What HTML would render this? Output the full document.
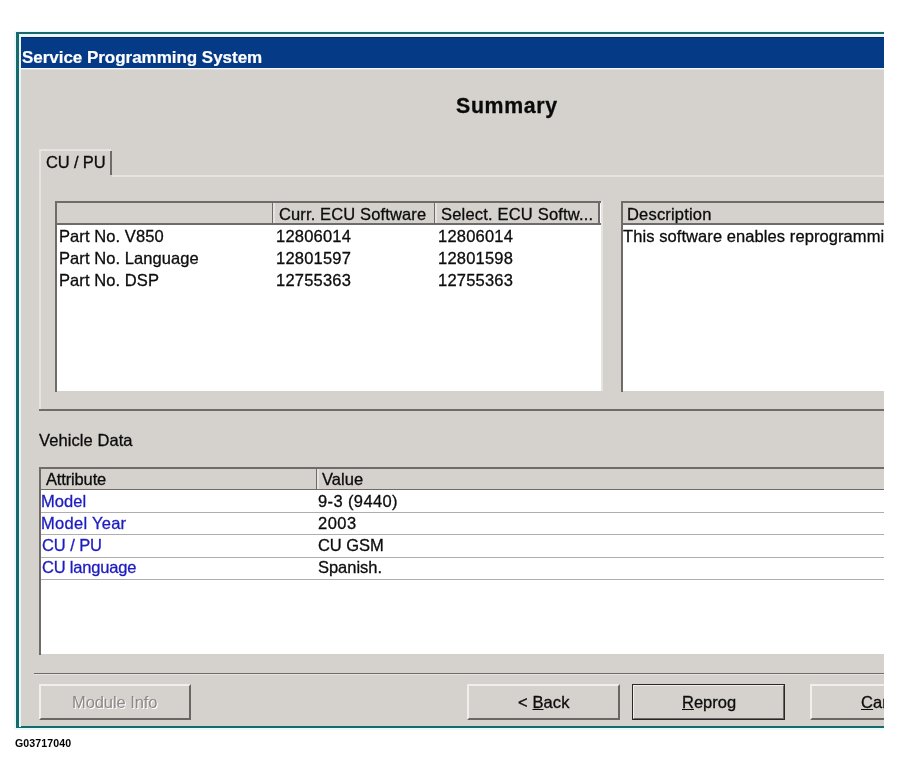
<!DOCTYPE html>
<html><head><meta charset="utf-8"><title>Service Programming System</title>
<style>
html,body{margin:0;padding:0;background:#fff;}
body{width:900px;height:779px;position:relative;overflow:hidden;font-family:"Liberation Sans",sans-serif;font-size:16.5px;color:#0c0c0c;}
.a{position:absolute;}
.t,.bt{will-change:transform;-webkit-text-stroke:0.3px currentColor;}
.t{position:absolute;white-space:nowrap;line-height:18px;font-size:16.5px;letter-spacing:0.08px;}
#clip{left:0;top:0;width:884px;height:779px;overflow:hidden;}
#win{left:16px;top:32px;width:900px;height:696px;background:#d5d1cd;}
#teal{left:16px;top:32px;width:900px;height:692px;border-left:3px solid #176a6c;border-top:2px solid #176a6c;border-bottom:2px solid #176a6c;}
#lite{left:19px;top:34px;width:900px;height:690px;border-left:2px solid #e9f5f8;border-top:3px solid #e9f5f8;}
#title{left:21px;top:37px;width:900px;height:31px;background:#053a87;border-top:1px solid #032c6c;box-sizing:border-box;}
#titletx{left:21.7px;top:48px;color:#fff;font-weight:bold;line-height:20px;font-size:17px;letter-spacing:-0.03px;-webkit-text-stroke:0.2px #fff;}
#tline{left:21px;top:68px;width:900px;height:1px;background:#f4f6f8;border-bottom:1px solid #e2e0dd;}
#summary{left:456px;top:94px;font-weight:bold;font-size:21.3px;line-height:24px;color:#0a0a0a;letter-spacing:0.68px;}
/* tab */
.hl{background:#e6e3e0;}
.dk{background:#6f6b68;}
#tabtx{left:45.6px;top:153px;letter-spacing:-0.15px;}
/* lists */
.wb{background:#fff;}
.hd{background:#d5d1cd;}
.bl{color:#1c1cc0;}
.rl{height:1px;background:#aeaeae;left:41px;width:900px;}
/* bottom */
.btn{box-sizing:border-box;height:36px;border-left:2px solid #f1efec;border-top:2px solid #f1efec;border-right:2px solid #6a6663;border-bottom:2px solid #6a6663;}
.bt{position:absolute;white-space:nowrap;line-height:18px;font-size:16.5px;top:693px;letter-spacing:0.1px;}
.bt i{font-style:normal;text-decoration:underline;}
#cap{left:14.5px;top:737px;font-weight:bold;font-size:10.6px;line-height:12px;color:#000;letter-spacing:0.1px;-webkit-text-stroke:0;}
</style></head><body>
<div id="clip" class="a">
  <div class="a" style="left:14px;top:31px;width:900px;height:699px;background:#eafafc;"></div>
  <div id="win" class="a"></div>
  <div id="teal" class="a"></div>
  <div id="lite" class="a"></div>
  <div id="title" class="a"></div>
  <span id="titletx" class="t">Service Programming System</span>
  <div id="tline" class="a"></div>
  <span id="summary" class="t">Summary</span>

  <!-- tab control -->
  <div class="a hl" style="left:39px;top:150px;width:2px;height:260px;"></div>
  <div class="a hl" style="left:39px;top:149px;width:72px;height:2px;"></div>
  <div class="a dk" style="left:110px;top:151px;width:2px;height:24px;"></div>
  <div class="a hl" style="left:112px;top:175px;width:800px;height:2px;"></div>
  <div class="a dk" style="left:39px;top:409px;width:900px;height:2px;"></div>
  <span id="tabtx" class="t">CU / PU</span>

  <!-- list 1 -->
  <div class="a wb" style="left:55px;top:201px;width:546px;height:190px;"></div>
  <div class="a" style="left:601px;top:201px;width:2px;height:190px;background:#e6e4e2;"></div>
  <div class="a hd" style="left:57px;top:203px;width:542px;height:20px;"></div>
  <div class="a dk" style="left:55px;top:201px;width:546px;height:2px;"></div>
  <div class="a dk" style="left:55px;top:201px;width:2px;height:191px;"></div>
  <div class="a dk" style="left:57px;top:223px;width:544px;height:2px;"></div>
  <div class="a dk" style="left:598px;top:203px;width:2px;height:22px;"></div>
  <div class="a dk" style="left:272px;top:203px;width:1px;height:20px;"></div>
  <div class="a hl" style="left:273px;top:203px;width:2px;height:20px;"></div>
  <div class="a dk" style="left:434px;top:203px;width:1px;height:20px;"></div>
  <div class="a hl" style="left:435px;top:203px;width:2px;height:20px;"></div>
  <span class="t" style="left:278.5px;top:204.5px;letter-spacing:0.13px;">Curr. ECU Software</span>
  <span class="t" style="left:441px;top:204.5px;letter-spacing:0.19px;">Select. ECU Softw...</span>
  <span class="t" style="left:58.5px;top:226.5px;">Part No. V850</span>
  <span class="t" style="left:58.5px;top:248.5px;">Part No. Language</span>
  <span class="t" style="left:58.5px;top:270.5px;">Part No. DSP</span>
  <span class="t" style="left:275.5px;letter-spacing:0.2px;top:226.5px;">12806014</span>
  <span class="t" style="left:275.5px;letter-spacing:0.2px;top:248.5px;">12801597</span>
  <span class="t" style="left:275.5px;letter-spacing:0.2px;top:270.5px;">12755363</span>
  <span class="t" style="left:437.5px;letter-spacing:0.2px;top:226.5px;">12806014</span>
  <span class="t" style="left:437.5px;letter-spacing:0.2px;top:248.5px;">12801598</span>
  <span class="t" style="left:437.5px;letter-spacing:0.2px;top:270.5px;">12755363</span>

  <!-- list 2 -->
  <div class="a wb" style="left:621px;top:201px;width:300px;height:190px;"></div>
  <div class="a hd" style="left:623px;top:203px;width:300px;height:20px;"></div>
  <div class="a dk" style="left:621px;top:201px;width:300px;height:2px;"></div>
  <div class="a dk" style="left:621px;top:201px;width:2px;height:191px;"></div>
  <div class="a dk" style="left:623px;top:223px;width:300px;height:2px;"></div>
  <span class="t" style="left:627px;top:204.5px;letter-spacing:0.18px;">Description</span>
  <span class="t" style="left:622.5px;top:226.5px;">This software enables reprogramming of the control unit</span>

  <!-- vehicle data -->
  <span class="t" style="left:39px;top:431px;">Vehicle Data</span>
  <div class="a wb" style="left:39px;top:467px;width:900px;height:187px;"></div>
  <div class="a hd" style="left:41px;top:469px;width:900px;height:20px;"></div>
  <div class="a dk" style="left:39px;top:467px;width:900px;height:2px;"></div>
  <div class="a dk" style="left:39px;top:467px;width:2px;height:188px;"></div>
  <div class="a dk" style="left:41px;top:489px;width:900px;height:1px;"></div>
  <div class="a dk" style="left:316px;top:469px;width:1px;height:20px;"></div>
  <div class="a hl" style="left:317px;top:469px;width:2px;height:20px;"></div>
  <span class="t" style="left:45.8px;top:470px;letter-spacing:-0.15px;">Attribute</span>
  <span class="t" style="left:322px;top:470px;">Value</span>
  <div class="a rl" style="top:512px;"></div>
  <div class="a rl" style="top:534px;"></div>
  <div class="a rl" style="top:557px;"></div>
  <div class="a rl" style="top:579px;"></div>
  <span class="t bl" style="left:40.8px;top:492px;">Model</span>
  <span class="t bl" style="left:40.8px;top:514px;letter-spacing:0.28px;">Model Year</span>
  <span class="t bl" style="left:41.5px;top:536px;letter-spacing:-0.09px;">CU / PU</span>
  <span class="t bl" style="left:41.5px;top:558px;letter-spacing:-0.19px;">CU language</span>
  <span class="t" style="left:318px;top:492px;letter-spacing:0.38px;">9-3 (9440)</span>
  <span class="t" style="left:318px;top:514px;letter-spacing:0.5px;">2003</span>
  <span class="t" style="left:318px;top:536px;letter-spacing:-0.05px;">CU GSM</span>
  <span class="t" style="left:318px;top:558px;letter-spacing:-0.03px;">Spanish.</span>

  <!-- bottom -->
  <div class="a dk" style="left:34px;top:673px;width:900px;height:1px;"></div>
  <div class="a hl" style="left:34px;top:674px;width:900px;height:1px;"></div>
  <div class="a btn" style="left:39px;top:684px;width:152px;"></div>
  <span class="bt" style="left:72px;color:#8c8a88;text-shadow:1px 1px 0 #fff;-webkit-text-stroke:0;letter-spacing:-0.08px;">Module Info</span>
  <div class="a btn" style="left:467px;top:684px;width:153px;"></div>
  <span class="bt" style="left:518px;">&lt; <i>B</i>ack</span>
  <div class="a" style="left:632px;top:684px;width:153px;height:36px;box-sizing:border-box;border:1px solid #2a2826;"></div>
  <div class="a btn" style="left:633px;top:685px;width:151px;height:34px;border-left-width:1px;border-top-width:1px;border-right-width:1px;border-bottom-width:1px;"></div>
  <span class="bt" style="left:682px;letter-spacing:0;"><i>R</i>eprog</span>
  <div class="a btn" style="left:810px;top:684px;width:155px;"></div>
  <span class="bt" style="left:861px;"><i>C</i>ancel</span>
</div>
<span id="cap" class="t">G03717040</span>
</body></html>
